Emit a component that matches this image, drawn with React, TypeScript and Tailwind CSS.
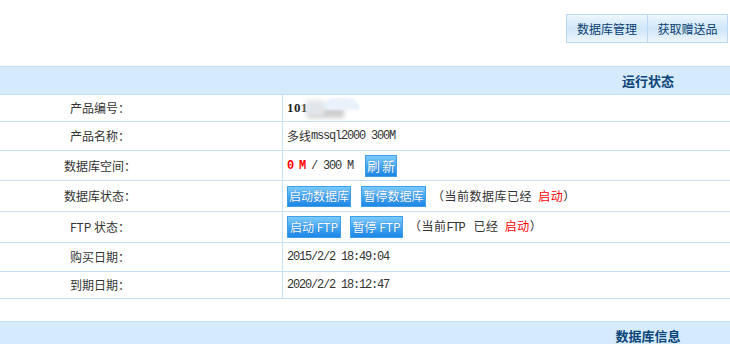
import React from "react";

const cjk = { fontFamily: '"Noto Sans CJK SC", "Noto Sans", sans-serif' };

function M({ children, bold, className = "" }: { children: React.ReactNode; bold?: boolean; className?: string }) {
  return (
    <span
      className={`tracking-[-1.2px] ${bold ? "font-bold" : ""} ${className}`}
      style={{ fontFamily: '"Liberation Mono", "DejaVu Sans Mono", monospace' }}
    >
      {children}
    </span>
  );
}

function Btn({ children, w, h, className = "" }: { children: React.ReactNode; w: string; h: string; className?: string }) {
  return (
    <span
      className={`inline-flex items-center justify-center ${w} ${h} border border-[#3f9fe6] bg-gradient-to-b from-[#7ccafc] via-[#44a8f2] to-[#1a86e5] text-white text-[12px] leading-none [text-shadow:0_0_1px_rgba(0,60,140,0.6)] ${className}`}
    >
      {children}
    </span>
  );
}

function Row({ label, h, children }: { label: string; h: string; children: React.ReactNode }) {
  return (
    <div className={`flex ${h} border-b border-[#c9e1f7]`}>
      <div className="w-[283px] shrink-0 border-r border-[#c9e1f7] flex items-center">
        <div className="w-[200px] text-center text-[12px] text-[#333]">{label}</div>
      </div>
      <div className="flex items-center pl-[4px] text-[12px] text-[#333] whitespace-pre">{children}</div>
    </div>
  );
}

function Header({ title }: { title: string }) {
  return (
    <div className="flex justify-end h-[29px] bg-[#d5eafc] border-y border-[#c3dcf3]">
      <div className="w-[164px] flex items-center justify-center text-[13px] font-bold text-[#0c4579]">{title}</div>
    </div>
  );
}

export default function App() {
  return (
    <div className="w-[730px] h-[344px] bg-white overflow-hidden" style={cjk}>
      <div className="h-[66px] flex justify-end pt-[14px] pr-[2px]">
        <div className="flex h-[29px] border border-[#b8d8f4] bg-gradient-to-b from-[#eef6fd] via-[#cfe6f9] to-[#eef6fd]">
          <div className="w-[80px] flex items-center justify-center text-[12px] text-[#0a3d70]">数据库管理</div>
          <div className="w-[80px] border-l border-[#b8d8f4] flex items-center justify-center text-[12px] text-[#0a3d70]">获取赠送品</div>
        </div>
      </div>
      <Header title="运行状态" />
      <Row label="产品编号：" h="h-[27px]">
        <span className="font-bold text-[13px] text-[#222] tracking-[0.5px]" style={{ fontFamily: '"Liberation Serif", serif' }}>101</span>
        <span className="relative inline-block w-[56px] h-[20px] -ml-[2px] -mt-[1px]">
          <span className="absolute left-[2px] top-[8px] w-[36px] h-[12px] bg-[#cfcfcf] blur-[2px]" />
          <span className="absolute left-[16px] top-[0px] w-[38px] h-[12px] rounded-t-full bg-[#e9f2fb] blur-[1px]" />
          <span className="absolute left-[0px] top-[2px] w-[18px] h-[16px] bg-[#e2e6ea] blur-[2px]" />
        </span>
      </Row>
      <Row label="产品名称：" h="h-[29px]">
        <span>多线</span>
        <M>mssql2000 300M</M>
      </Row>
      <Row label="数据库空间：" h="h-[30px]">
        <M bold className="text-[#ff0000]">0 M</M>
        <M> / 300 M </M>
        <Btn w="w-[32px]" h="h-[22px]" className="ml-[6px] text-[13px] tracking-[2px] pl-[2px]">刷新</Btn>
      </Row>
      <Row label="数据库状态：" h="h-[31px]">
        <Btn w="w-[64px]" h="h-[21px]">启动数据库</Btn>
        <Btn w="w-[65px]" h="h-[21px]" className="ml-[10px]">暂停数据库</Btn>
        <span className="ml-[6px] tracking-[0.5px]">（当前数据库已经 <span className="ml-[3px] text-[#ff0000]">启动</span>）</span>
      </Row>
      <Row label="FTP 状态：" h="h-[31px]">
        <Btn w="w-[54px]" h="h-[22px]">启动 FTP</Btn>
        <Btn w="w-[53px]" h="h-[22px]" className="ml-[9px]">暂停 FTP</Btn>
        <span className="ml-[6px] tracking-[0.5px]">（当前<M>FTP </M><span className="ml-[3px]">已经</span> <span className="ml-[3px] text-[#ff0000]">启动</span>）</span>
      </Row>
      <Row label="购买日期：" h="h-[29px]">
        <M>2015/2/2 18:49:04</M>
      </Row>
      <Row label="到期日期：" h="h-[27px]">
        <M>2020/2/2 18:12:47</M>
      </Row>
      <div className="h-[22px]" />
      <Header title="数据库信息" />
    </div>
  );
}
